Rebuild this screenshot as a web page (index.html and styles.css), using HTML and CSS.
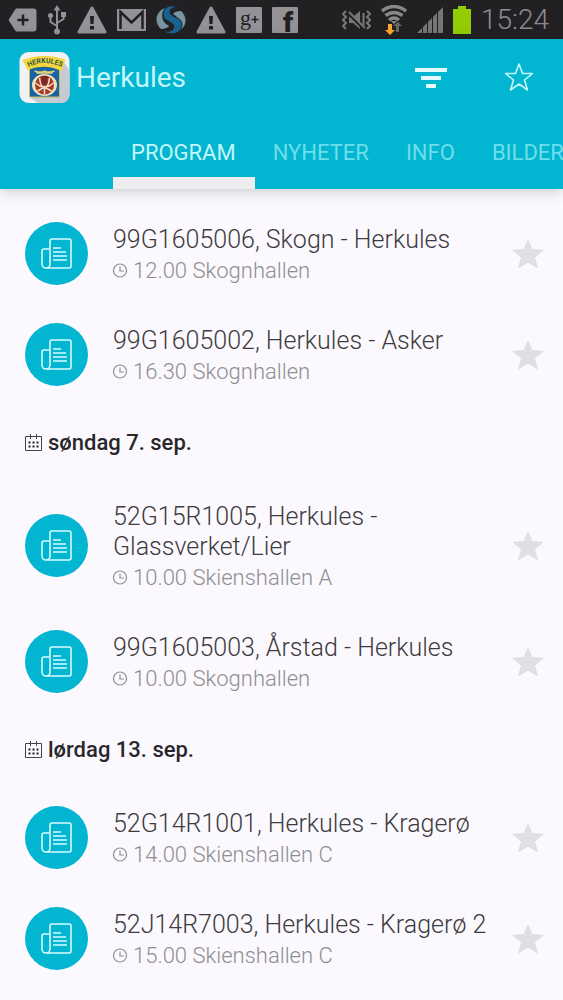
FILE: index.html
```
<!DOCTYPE html>
<html lang="no">
<head>
    <meta charset="UTF-8">
    <meta name="viewport" content="width=device-width, initial-scale=1.0">
    <title>Herkules - Program</title>
    <link rel="stylesheet" href="styles.css">
</head>
<body>
    <!-- Shared icons -->
    <svg class="sprite" aria-hidden="true">
        <symbol id="news" viewBox="0 0 31 31">
            <path d="M9 26V3a2 2 0 0 1 2-2h17a2 2 0 0 1 2 2v25a2 2 0 0 1-2 2H5a4 4 0 0 1-4-4V13a2 2 0 0 1 2-2h6M9 26a4 4 0 0 1-4 4" fill="none" stroke="#d9fbff" stroke-width="1.600"/>
            <path d="M12 10h8M12 14h13M12 18h14M12 22h14" fill="none" stroke="#d9fbff" stroke-width="1.600"/>
        </symbol>
        <symbol id="star" viewBox="0 0 32 30">
            <path d="M16 1l4 9.500 11 .8-8.500 7 3 10.500L16 23l-9.500 5.800 3-10.500L1 11.300l11-.8z" fill="#e0dfe3" stroke="#e0dfe3" stroke-linejoin="round"/>
        </symbol>
        <symbol id="clock" viewBox="0 0 16 16">
            <circle cx="7" cy="7.500" r="6.500" fill="none" stroke="#909094" stroke-width="1.200"/>
            <path d="M7 3.500v4.500h4" fill="none" stroke="#909094" stroke-width="1.200"/>
        </symbol>
        <symbol id="calendar" viewBox="0 0 18 18">
            <path d="M.5 2.500h16v14H.5zM5.500 0v5M11.500 0v5" fill="none" stroke="#444"/>
            <path d="M3.500 8.500h2m2 0h2m2 0h2M3.500 12.500h2m2 0h2m2 0h2" stroke="#222" stroke-width="2"/>
        </symbol>
        <symbol id="warning" viewBox="0 0 30 28">
            <path d="M15 2L28 26H2z" fill="#949296" stroke="#949296" stroke-width="3" stroke-linejoin="round"/>
            <path d="M13 10h4l-.5 8h-3zM13 20h4v3.500h-4z" fill="#222023"/>
        </symbol>
    </svg>

    <div class="statusbar">
        <div class="notifications">
            <svg width="29" height="26" viewBox="0 0 29 26" aria-hidden="true">
                <path d="M8 2h18a2 2 0 0 1 2 2v18a2 2 0 0 1-2 2H8L1 13z" fill="#949296" stroke="#949296" stroke-linejoin="round"/>
                <path d="M15 7.500v11M9.500 13h11" stroke="#222023" stroke-width="2.500"/>
            </svg>
            <svg width="20" height="30" viewBox="0 0 20 30" aria-hidden="true">
                <path d="M10 4v22M10 21l-6.500-4v-5M10 18l6.500-4V9" fill="none" stroke="#949296" stroke-width="2"/>
                <path d="M10 0l3.500 5.500h-7zM14 7h5v5h-5z" fill="#949296"/>
                <circle cx="3.500" cy="10.500" r="2.500" fill="#949296"/>
                <circle cx="10" cy="26.500" r="3" fill="#949296"/>
            </svg>
            <svg width="30" height="28" aria-hidden="true"><use href="#warning"/></svg>
            <svg width="29" height="22" viewBox="0 0 29 22" aria-hidden="true">
                <path d="M0 0h29v22H0z" fill="#949296"/>
                <path d="M3.500 20V3l11 10.500L25.500 3v17" fill="none" stroke="#222023" stroke-width="2.500"/>
            </svg>
            <svg width="30" height="30" viewBox="0 0 30 30" aria-hidden="true">
                <path d="M9 3C-1 7-2 18 5 24c3 0 7-1 8-3C6 17 4 11 9 3z" fill="#78959f"/>
                <path d="M21 27c10-4 11-15 4-21-3 0-7 1-8 3 7 4 9 10 4 18z" fill="#78959f"/>
                <path d="M23 3C15-2 7 2 7 9c0 8 11 7 11 13 0 4-6 5-11 4 8 6 19 2 19-6 0-9-12-7-12-13 0-4 4-5 9-4z" fill="#176493" stroke="#222023"/>
            </svg>
            <svg width="30" height="28" aria-hidden="true"><use href="#warning"/></svg>
            <svg width="26" height="26" viewBox="0 0 26 26" aria-hidden="true">
                <rect width="26" height="26" rx="1" fill="#949296"/>
                <text x="4" y="18" class="gplus">g</text>
                <path d="M19 9v7M15.500 12.500h7" stroke="#222023" stroke-width="1.500"/>
            </svg>
            <svg width="26" height="26" viewBox="0 0 26 26" aria-hidden="true">
                <rect width="26" height="26" rx="1" fill="#949296"/>
                <text x="11" y="25" class="fb">f</text>
            </svg>
        </div>
        <div class="system">
            <svg width="29" height="20" viewBox="0 0 29 20" aria-hidden="true">
                <path d="M7 7h4l7-6v18l-7-6H7z" fill="#777"/>
                <path d="M6 3l16 16" stroke="#222023" stroke-width="3"/>
                <path d="M7 2l16 16" stroke="#777" stroke-width="2"/>
                <path d="M4 1L1 4l3 3-3 3 3 3-3 3 3 3M25 1l3 3-3 3 3 3-3 3 3 3-3 3M21.500 3v12" fill="none" stroke="#777" stroke-width="2"/>
            </svg>
            <svg width="26" height="30" viewBox="0 0 26 30" aria-hidden="true">
                <path d="M1 6q12-9 24 0M4.500 10.500q8.500-6 17 0M8 15q5-4 10 0" fill="none" stroke="#888" stroke-width="3.500"/>
                <path d="M10 16l3 3 3-3z" fill="#888"/>
                <path d="M7 19h4v6h3l-5 5-5-5h3z" fill="#ffa72e"/>
                <path d="M15 27v-6h-3l5-4 4 4h-3v6z" fill="#666"/>
            </svg>
            <svg width="26" height="26" viewBox="0 0 26 26" aria-hidden="true">
                <path d="M0 26l5-5v5zM6 20l4-4v10H6zM11 15l4-4v15h-4zM16 10l4-4v20h-4zM21 5l5-5v26h-5z" fill="#777"/>
            </svg>
            <svg width="18" height="28" viewBox="0 0 18 28" aria-hidden="true">
                <path d="M5 0h8v3h5v25H0V3h5z" fill="#94cc03"/>
            </svg>
            <time class="time">15:24</time>
        </div>
    </div>

    <header>
        <div class="appbar">
            <svg class="logo" viewBox="0 0 50 51" aria-hidden="true">
                <rect width="50" height="51" rx="9" fill="#f1f2f5"/>
                <path d="M44 10l6 8v24q0 9-9 9H18l-8-6z" fill="#c5cbd1"/>
                <path d="M10 13h30v32H10z" fill="#1b62a1" stroke="#c7be5b"/>
                <path d="M3 8Q25 0 46 8l-4 11Q25 11 8 18z" fill="#f5d63c"/>
                <path id="arc" d="M9 15Q25 7 42 15" fill="none"/>
                <text class="logo-text"><textPath href="#arc">HERKULES</textPath></text>
                <path d="M15 19l3 1h5l2-1 2 1h5l3-1M17 21h16" fill="none" stroke="#ddd27a" stroke-width="1.500"/>
                <ellipse cx="25" cy="33" rx="12.500" ry="11" fill="#eee3bb"/>
                <circle cx="25" cy="33" r="9.500" fill="#a9382a"/>
                <path d="M25 30v12M16 31q9 8 18 0M20 26q1 9 5 10 4-1 5-10M18 39l7-4 7 4" fill="none" stroke="#f2e5cc" stroke-width="1.500"/>
                <path d="M22 24h6v7l-3 3-3-3z" fill="#782b29"/>
            </svg>
            <h1>Herkules</h1>
            <button class="action" type="button" aria-label="Filter">
                <svg width="32" height="20" viewBox="0 0 32 20" aria-hidden="true">
                    <path d="M0 0h32v4H0zM6 8h20v4H6zM11 16h10v4H11z" fill="#e4fcff"/>
                </svg>
            </button>
            <button class="action" type="button" aria-label="Favoritter">
                <svg width="30" height="30" viewBox="0 0 30 30" aria-hidden="true">
                    <path d="M15 1l3.500 9.500h10L20.500 17l3 10L15 21l-8.500 6 3-10-8-6.500h10z" fill="none" stroke="#c4f7fc" stroke-width="1.600" stroke-linejoin="round"/>
                </svg>
            </button>
        </div>
        <nav>
            <a class="active" href="#program">PROGRAM</a>
            <a href="#nyheter">NYHETER</a>
            <a href="#info">INFO</a>
            <a href="#bilder">BILDER</a>
        </nav>
    </header>

    <main id="program">
        <article class="match">
            <span class="badge"><svg width="31" height="31" aria-hidden="true"><use href="#news"/></svg></span>
            <div class="details">
                <h3>99G1605006, Skogn - Herkules</h3>
                <p><svg width="16" height="16" aria-hidden="true"><use href="#clock"/></svg>12.00 Skognhallen</p>
            </div>
            <button class="favorite" type="button" aria-label="Favoritt"><svg width="32" height="30" aria-hidden="true"><use href="#star"/></svg></button>
        </article>
        <article class="match">
            <span class="badge"><svg width="31" height="31" aria-hidden="true"><use href="#news"/></svg></span>
            <div class="details">
                <h3>99G1605002, Herkules - Asker</h3>
                <p><svg width="16" height="16" aria-hidden="true"><use href="#clock"/></svg>16.30 Skognhallen</p>
            </div>
            <button class="favorite" type="button" aria-label="Favoritt"><svg width="32" height="30" aria-hidden="true"><use href="#star"/></svg></button>
        </article>

        <h2><svg width="18" height="18" aria-hidden="true"><use href="#calendar"/></svg>søndag 7. sep.</h2>
        <article class="match">
            <span class="badge"><svg width="31" height="31" aria-hidden="true"><use href="#news"/></svg></span>
            <div class="details">
                <h3>52G15R1005, Herkules - Glassverket/Lier</h3>
                <p><svg width="16" height="16" aria-hidden="true"><use href="#clock"/></svg>10.00 Skienshallen A</p>
            </div>
            <button class="favorite" type="button" aria-label="Favoritt"><svg width="32" height="30" aria-hidden="true"><use href="#star"/></svg></button>
        </article>
        <article class="match">
            <span class="badge"><svg width="31" height="31" aria-hidden="true"><use href="#news"/></svg></span>
            <div class="details">
                <h3>99G1605003, Årstad - Herkules</h3>
                <p><svg width="16" height="16" aria-hidden="true"><use href="#clock"/></svg>10.00 Skognhallen</p>
            </div>
            <button class="favorite" type="button" aria-label="Favoritt"><svg width="32" height="30" aria-hidden="true"><use href="#star"/></svg></button>
        </article>

        <h2><svg width="18" height="18" aria-hidden="true"><use href="#calendar"/></svg>lørdag 13. sep.</h2>
        <article class="match">
            <span class="badge"><svg width="31" height="31" aria-hidden="true"><use href="#news"/></svg></span>
            <div class="details">
                <h3>52G14R1001, Herkules - Kragerø</h3>
                <p><svg width="16" height="16" aria-hidden="true"><use href="#clock"/></svg>14.00 Skienshallen C</p>
            </div>
            <button class="favorite" type="button" aria-label="Favoritt"><svg width="32" height="30" aria-hidden="true"><use href="#star"/></svg></button>
        </article>
        <article class="match">
            <span class="badge"><svg width="31" height="31" aria-hidden="true"><use href="#news"/></svg></span>
            <div class="details">
                <h3>52J14R7003, Herkules - Kragerø 2</h3>
                <p><svg width="16" height="16" aria-hidden="true"><use href="#clock"/></svg>15.00 Skienshallen C</p>
            </div>
            <button class="favorite" type="button" aria-label="Favoritt"><svg width="32" height="30" aria-hidden="true"><use href="#star"/></svg></button>
        </article>
    </main>
</body>
</html>
```

FILE: styles.css
```
* {
    box-sizing: border-box;
}

body {
    font-family: Roboto, sans-serif;
    margin: 0;
    background-color: #fbf9fd;
    color: #3e3c40;
}

h1, h2, h3, p {
    margin: 0;
}

svg {
    flex-shrink: 0;
}

button {
    display: flex;
    align-items: center;
    justify-content: center;
    padding: 0;
    border: none;
    background: none;
    cursor: pointer;
}

.sprite {
    display: none;
}

/* Status bar */
.statusbar {
    display: flex;
    align-items: center;
    justify-content: space-between;
    height: 39px;
    padding: 0 14px 0 8px;
    background-color: #222023;
}

.notifications {
    display: flex;
    align-items: center;
    gap: 10px;
}

.system {
    display: flex;
    align-items: center;
    gap: 10px;
}

.time {
    color: #8d8b8f;
    font-size: 28px;
    font-weight: 300;
}

.gplus {
    fill: #222023;
    font-family: "Liberation Serif", serif;
    font-size: 22px;
}

.fb {
    fill: #222023;
    font-size: 28px;
    font-weight: 900;
}

/* Header */
header {
    position: relative;
    background-color: #02b5d0;
    box-shadow: 0 2px 14px rgba(0, 0, 0, 0.2);
}

.appbar {
    display: flex;
    align-items: center;
    height: 77px;
    padding-left: 19px;
}

.logo {
    width: 51px;
    height: 51px;
}

.logo-text {
    fill: #305a45;
    font-size: 7px;
    font-weight: 700;
}

h1 {
    margin: 0 auto 0 6px;
    color: #c4f7fc;
    font-size: 28px;
    font-weight: 400;
}

.action {
    width: 88px;
    height: 77px;
}

nav {
    display: flex;
    height: 73px;
    padding-left: 113px;
    overflow: hidden;
}

nav a {
    flex-shrink: 0;
    padding: 0 19px 0 18px;
    color: #6fdeec;
    font-size: 22px;
    line-height: 73px;
    text-decoration: none;
}

nav .active {
    color: #c4f7fc;
    border-bottom: 12px solid #eeeef1;
}

/* Match list */
main {
    padding-top: 14px;
}

h2 {
    display: flex;
    align-items: center;
    gap: 5px;
    height: 75px;
    padding-left: 25px;
    color: #29272b;
    font-size: 22px;
    font-weight: 500;
}

.match {
    display: flex;
    align-items: center;
    padding: 0 19px 0 25px;
}

.badge {
    display: flex;
    align-items: center;
    justify-content: center;
    flex-shrink: 0;
    width: 63px;
    height: 63px;
    border-radius: 50%;
    background-color: #02b5d0;
}

.details {
    flex: 1;
    padding: 22px 20px 18px 25px;
}

h3 {
    font-size: 25px;
    font-weight: 300;
    line-height: 30px;
}

.details p {
    display: flex;
    align-items: center;
    gap: 4px;
    color: #908e93;
    font-size: 22px;
    font-weight: 300;
    line-height: 31px;
}

.favorite {
    width: 32px;
    height: 63px;
}
```
